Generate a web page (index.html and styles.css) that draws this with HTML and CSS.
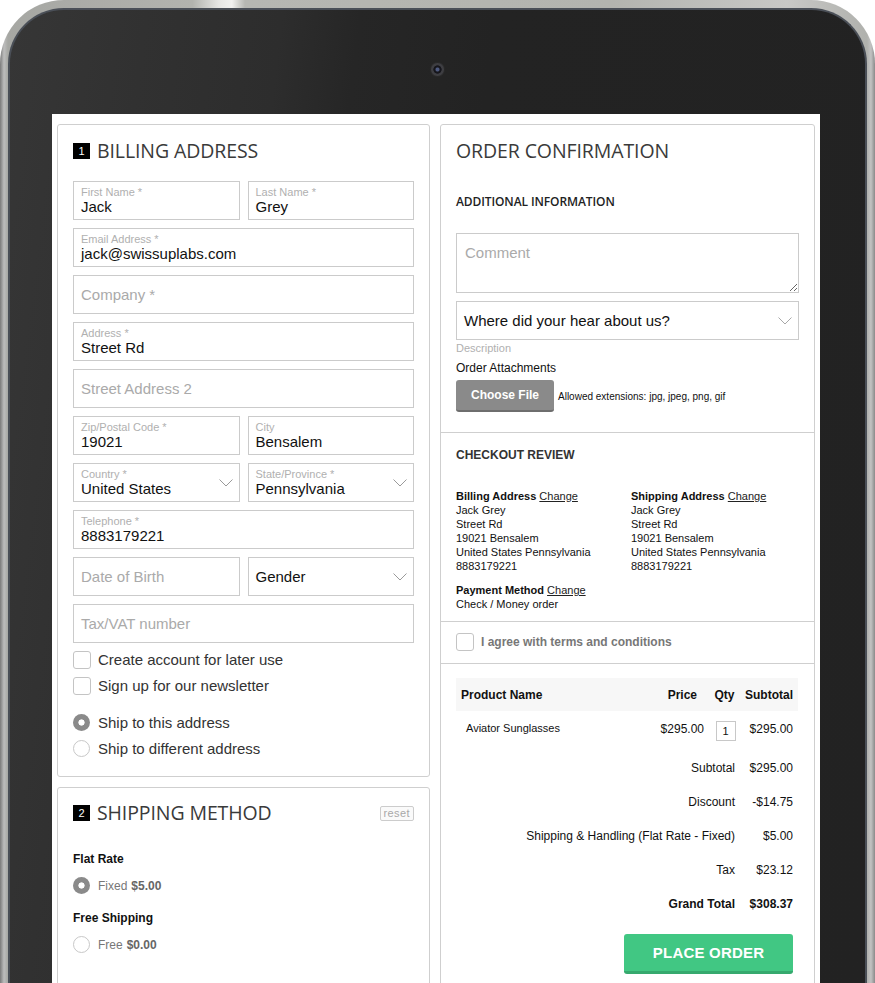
FILE: index.html
```html
<!DOCTYPE html>
<html lang="en">
<head>
<meta charset="utf-8">
<title>Checkout</title>
<link rel="stylesheet" href="styles.css">
</head>
<body>
<div class="tablet">
  <div class="bezel">
    <div class="camera"></div>
    <div class="screen">
      <div class="col-left">
        <section class="panel billing">
          <h2 class="title"><span class="badge">1</span>BILLING ADDRESS</h2>
          <div class="fields">
            <div class="row2">
              <div class="field"><span class="lbl">First Name *</span><span class="val">Jack</span></div>
              <div class="field"><span class="lbl">Last Name *</span><span class="val">Grey</span></div>
            </div>
            <div class="field"><span class="lbl">Email Address *</span><span class="val">jack@swissuplabs.com</span></div>
            <div class="field ph">Company *</div>
            <div class="field"><span class="lbl">Address *</span><span class="val">Street Rd</span></div>
            <div class="field ph">Street Address 2</div>
            <div class="row2">
              <div class="field"><span class="lbl">Zip/Postal Code *</span><span class="val">19021</span></div>
              <div class="field"><span class="lbl">City</span><span class="val">Bensalem</span></div>
            </div>
            <div class="row2">
              <div class="field sel">
                <div class="stack"><span class="lbl">Country *</span><span class="val">United States</span></div>
                <svg class="chev" width="14" height="8" viewBox="0 0 14 8"><polyline points="0.5,0.5 7,7 13.5,0.5" fill="none" stroke="#9a9a9a" stroke-width="1"/></svg>
              </div>
              <div class="field sel">
                <div class="stack"><span class="lbl">State/Province *</span><span class="val">Pennsylvania</span></div>
                <svg class="chev" width="14" height="8" viewBox="0 0 14 8"><polyline points="0.5,0.5 7,7 13.5,0.5" fill="none" stroke="#9a9a9a" stroke-width="1"/></svg>
              </div>
            </div>
            <div class="field"><span class="lbl">Telephone *</span><span class="val">8883179221</span></div>
            <div class="row2">
              <div class="field ph">Date of Birth</div>
              <div class="field sel plain">
                <span class="val">Gender</span>
                <svg class="chev" width="14" height="8" viewBox="0 0 14 8"><polyline points="0.5,0.5 7,7 13.5,0.5" fill="none" stroke="#9a9a9a" stroke-width="1"/></svg>
              </div>
            </div>
            <div class="field ph">Tax/VAT number</div>
          </div>
          <div class="checks">
            <label class="opt"><span class="box"></span>Create account for later use</label>
            <label class="opt"><span class="box"></span>Sign up for our newsletter</label>
          </div>
          <div class="radios">
            <label class="opt"><span class="radio on"></span>Ship to this address</label>
            <label class="opt"><span class="radio"></span>Ship to different address</label>
          </div>
        </section>

        <section class="panel shipping">
          <div class="ship-head">
            <h2 class="title"><span class="badge">2</span>SHIPPING METHOD</h2>
            <span class="reset">reset</span>
          </div>
          <div class="carrier">Flat Rate</div>
          <label class="method"><span class="radio on"></span>Fixed <b>$5.00</b></label>
          <div class="carrier second">Free Shipping</div>
          <label class="method"><span class="radio"></span>Free <b>$0.00</b></label>
        </section>
      </div>

      <section class="panel order">
        <div class="sec info">
          <h2 class="title">ORDER CONFIRMATION</h2>
          <h3 class="subhead">ADDITIONAL INFORMATION</h3>
          <textarea class="comment" placeholder="Comment"></textarea>
          <div class="field sel plain hear">
            <span class="val">Where did your hear about us?</span>
            <svg class="chev" width="14" height="8" viewBox="0 0 14 8"><polyline points="0.5,0.5 7,7 13.5,0.5" fill="none" stroke="#a8a8a8" stroke-width="1"/></svg>
          </div>
          <div class="desc">Description</div>
          <div class="attach-label">Order Attachments</div>
          <div class="attach">
            <button class="file-btn" type="button">Choose File</button>
            <span class="ext">Allowed extensions: jpg, jpeg, png, gif</span>
          </div>
        </div>

        <div class="sec review">
          <h3 class="rev-head">CHECKOUT REVIEW</h3>
          <div class="addr-grid">
            <div class="addr">
              <div><b>Billing Address</b> <u>Change</u></div>
              <div>Jack Grey</div>
              <div>Street Rd</div>
              <div>19021 Bensalem</div>
              <div>United States Pennsylvania</div>
              <div>8883179221</div>
            </div>
            <div class="addr">
              <div><b>Shipping Address</b> <u>Change</u></div>
              <div>Jack Grey</div>
              <div>Street Rd</div>
              <div>19021 Bensalem</div>
              <div>United States Pennsylvania</div>
              <div>8883179221</div>
            </div>
          </div>
          <div class="addr pay">
            <div><b>Payment Method</b> <u>Change</u></div>
            <div>Check / Money order</div>
          </div>
        </div>

        <div class="sec agree">
          <label class="opt"><span class="box"></span>I agree with terms and conditions</label>
        </div>

        <div class="sec totals-sec">
          <table class="items">
            <colgroup><col class="c1"><col class="c2"><col class="c3"><col class="c4"></colgroup>
            <thead>
              <tr><th class="name">Product Name</th><th class="price">Price</th><th class="qty">Qty</th><th class="sub">Subtotal</th></tr>
            </thead>
            <tbody>
              <tr class="item"><td class="name">Aviator Sunglasses</td><td class="price">$295.00</td><td class="qty"><span class="qbox">1</span></td><td class="sub">$295.00</td></tr>
            </tbody>
          </table>
          <div class="totals">
            <div class="trow"><span>Subtotal</span><span>$295.00</span></div>
            <div class="trow"><span>Discount</span><span>-$14.75</span></div>
            <div class="trow"><span>Shipping &amp; Handling (Flat Rate - Fixed)</span><span>$5.00</span></div>
            <div class="trow"><span>Tax</span><span>$23.12</span></div>
            <div class="trow grand"><span>Grand Total</span><span>$308.37</span></div>
          </div>
          <button class="place" type="button">PLACE ORDER</button>
        </div>
      </section>
    </div>
  </div>
</div>
</body>
</html>
```

FILE: styles.css
```css
* { box-sizing: border-box; }
html, body { margin: 0; padding: 0; }
body {
  width: 875px;
  height: 983px;
  overflow: hidden;
  background: #fff;
  font-family: "Liberation Sans", Arial, sans-serif;
  color: #111;
}

.tablet {
  width: 875px;
  height: 983px;
  padding: 8px 8px 0;
  border-radius: 64px 64px 0 0;
  background: linear-gradient(90deg, #7a7a7a 0px, #bdbdbd 4px, #a6a7a3 8px, #b2b3ae 22%, #e6e6e4 25%, #f1f1f0 26.5%, #b6b7b2 28%, #b3b4af 70%, #c8c8c6 90%, #b0b1ad calc(100% - 8px), #c2c2c2 calc(100% - 4px), #8a8a8a 100%);
  overflow: hidden;
}

.bezel {
  height: 100%;
  border: 2px solid #4a4f57;
  border-bottom: none;
  border-radius: 56px 56px 0 0;
  background: linear-gradient(97deg, #363636 0%, #313131 14%, #2d2d2d 28%, #262626 36%, #232323 50%, #222 100%);
  padding: 52px 45px 0 42px;
  display: flex;
  flex-direction: column;
}

.camera {
  flex: none;
  align-self: center;
  margin-left: 3px;
  width: 15px;
  height: 15px;
  border-radius: 50%;
  background: radial-gradient(circle, #4e5a80 0 1.5px, #16161c 2.5px 3.8px, #3e3e42 4.5px);
  border: 1px solid #2a2a2a;
}

.screen {
  margin-top: 37px;
  flex: 1 0 auto;
  background: #fff;
  padding: 10px 5px;
  display: grid;
  grid-template-columns: 373px 375px;
  gap: 10px;
  align-items: start;
}

.col-left {
  display: flex;
  flex-direction: column;
  gap: 10px;
}

.panel {
  border: 1px solid #cfcfcf;
  border-radius: 3px;
  background: #fff;
}

.billing { padding: 15px 15px 19px; }
.shipping { padding: 14px 15px 60px; }

.title {
  margin: 0;
  display: flex;
  align-items: center;
  font-family: "Open Sans", "Noto Sans", sans-serif;
  font-weight: 400;
  font-size: 19.5px;
  line-height: 22px;
  color: #3a3a3a;
  letter-spacing: -0.1px;
}

.badge {
  width: 17px;
  height: 16px;
  background: #000;
  color: #fff;
  font-family: "Liberation Sans", Arial, sans-serif;
  font-size: 11px;
  line-height: 16px;
  text-align: center;
  margin-right: 7px;
  letter-spacing: 0;
}

.fields {
  margin-top: 19px;
  display: flex;
  flex-direction: column;
  gap: 8px;
}

.row2 {
  display: grid;
  grid-template-columns: 1fr 1fr;
  gap: 8px;
}

.field {
  height: 39px;
  border: 1px solid #cbcbcb;
  padding: 4px 7px 0;
  display: flex;
  flex-direction: column;
  background: #fff;
}

.lbl {
  font-size: 11px;
  line-height: 12px;
  color: #b0b0b0;
}

.val {
  font-size: 15px;
  line-height: 17px;
  color: #111;
}

.field.ph {
  padding: 0 7px;
  justify-content: center;
  font-size: 15px;
  color: #aaa;
}

.field.sel {
  flex-direction: row;
  align-items: center;
  padding: 0 6px 0 7px;
}

.field.sel .stack {
  flex: 1;
  display: flex;
  flex-direction: column;
  align-self: flex-start;
  padding-top: 4px;
}

.field.sel.plain .val { flex: 1; }

.chev { flex: none; margin-top: 1px; }

.checks {
  margin-top: 8px;
  display: flex;
  flex-direction: column;
  gap: 9px;
}

.radios {
  margin-top: 20px;
  display: flex;
  flex-direction: column;
  gap: 9px;
}

.opt {
  display: flex;
  align-items: center;
  height: 17px;
  font-size: 15px;
  color: #333;
}

.box {
  width: 18px;
  height: 18px;
  border: 1px solid #c4c4c4;
  border-radius: 3px;
  margin-right: 7px;
  flex: none;
  background: #fff;
}

.radio {
  width: 17px;
  height: 17px;
  border-radius: 50%;
  border: 1px solid #c8c8c8;
  margin-right: 8px;
  flex: none;
  background: #fff;
}

.radio.on {
  border: none;
  background: radial-gradient(circle, #fff 0 2.8px, #8a8a8a 3.4px);
}

.ship-head {
  display: flex;
  justify-content: space-between;
  align-items: center;
}

.reset {
  font-size: 11px;
  line-height: 13px;
  padding: 0 3px;
  margin-top: 1px;
  color: #a8a8a8;
  border: 1px solid #ccc;
  border-radius: 2px;
  background: #fafafa;
  letter-spacing: 0.4px;
}

.carrier {
  margin-top: 28px;
  font-size: 12px;
  line-height: 14px;
  font-weight: bold;
  color: #111;
}

.carrier.second { margin-top: 17px; }

.method {
  margin-top: 11px;
  display: flex;
  align-items: center;
  height: 17px;
  font-size: 12px;
  color: #777;
}

.method b { color: #666; margin-left: 4px; }

/* right panel */
.order { padding: 0; }

.sec { padding: 0 15px; }
.sec + .sec { border-top: 1px solid #cfcfcf; }

.info { padding-top: 15px; padding-bottom: 20px; }

.subhead {
  margin: 32px 0 0;
  font-family: "Open Sans", "Noto Sans", sans-serif;
  font-weight: 600;
  font-size: 12px;
  line-height: 16px;
  color: #222;
  letter-spacing: -0.1px;
}

.comment {
  display: block;
  margin-top: 23px;
  width: 100%;
  height: 60px;
  border: 1px solid #cbcbcb;
  padding: 10px 8px;
  font-family: "Liberation Sans", Arial, sans-serif;
  font-size: 15px;
  line-height: 17px;
  resize: vertical;
  outline: none;
}

.comment::placeholder { color: #aaa; }

.hear {
  margin-top: 8px;
  padding: 0 7px 0 8px;
}

.desc {
  margin-top: 1px;
  font-size: 11px;
  line-height: 14px;
  color: #b0b0b0;
}

.attach-label {
  margin-top: 6px;
  font-size: 12px;
  line-height: 14px;
  color: #111;
}

.attach {
  margin-top: 5px;
  display: flex;
  align-items: center;
}

.file-btn {
  width: 98px;
  height: 32px;
  border: none;
  border-bottom: 2px solid #6e6e6e;
  border-radius: 3px;
  background: #8a8a8a;
  color: #fff;
  font-family: "Liberation Sans", Arial, sans-serif;
  font-weight: bold;
  font-size: 12px;
  padding: 0;
}

.ext {
  margin-left: 4px;
  font-size: 10px;
  color: #111;
}

.review { padding-top: 15px; padding-bottom: 10px; }

.rev-head {
  margin: 0;
  font-size: 12px;
  line-height: 14px;
  font-weight: bold;
  color: #333;
}

.addr-grid {
  margin-top: 27px;
  display: grid;
  grid-template-columns: 175px 1fr;
}

.addr {
  font-size: 11px;
  line-height: 14px;
  color: #111;
}

.addr u { color: #222; }

.pay { margin-top: 10px; }

.agree { padding-top: 11px; padding-bottom: 12px; }

.agree .opt {
  height: 18px;
  font-size: 12px;
  font-weight: bold;
  color: #777;
}

.totals-sec { padding-top: 14px; padding-bottom: 30px; }

.items {
  width: 342px;
  border-collapse: collapse;
  table-layout: fixed;
  font-size: 12px;
}

.c1 { width: 184px; }
.c2 { width: 66px; }
.c3 { width: 35px; }
.c4 { width: 57px; }

.items th {
  height: 33px;
  background: #f7f7f7;
  font-weight: bold;
  color: #111;
  padding: 0;
  vertical-align: middle;
}

.items th.name { text-align: left; padding-left: 5px; }
.items th.price { text-align: right; padding-right: 9px; }
.items th.qty { text-align: center; padding-left: 2px; }
.items th.sub { text-align: right; padding-right: 5px; }

.items tr.item { height: 40px; }

.items td {
  vertical-align: top;
  padding: 10px 0 0;
  line-height: 16px;
  color: #111;
}

.items td.name { padding-left: 10px; font-size: 11px; line-height: 14px; }
.items td.price { text-align: right; padding-right: 2px; }
.items td.qty { text-align: center; padding-left: 4px; }
.items td.sub { text-align: right; padding-right: 5px; }

.qbox {
  display: inline-block;
  width: 20px;
  height: 20px;
  border: 1px solid #c8c8c8;
  font-size: 11px;
  line-height: 19px;
  text-align: center;
}

.trow {
  display: grid;
  grid-template-columns: 1fr 57px;
  height: 34px;
  align-items: center;
  width: 342px;
  font-size: 12px;
  color: #111;
}

.trow span:first-child { text-align: right; padding-right: 6px; }
.trow span:last-child { text-align: right; padding-right: 5px; }
.trow.grand { font-weight: bold; }

.place {
  display: block;
  margin: 13px 6px 0 auto;
  width: 169px;
  height: 40px;
  border: none;
  border-bottom: 3px solid #36a96e;
  border-radius: 3px;
  background: #41c783;
  color: #fff;
  font-family: "Liberation Sans", Arial, sans-serif;
  font-weight: bold;
  font-size: 15px;
  letter-spacing: 0.2px;
  padding: 0;
}
```
